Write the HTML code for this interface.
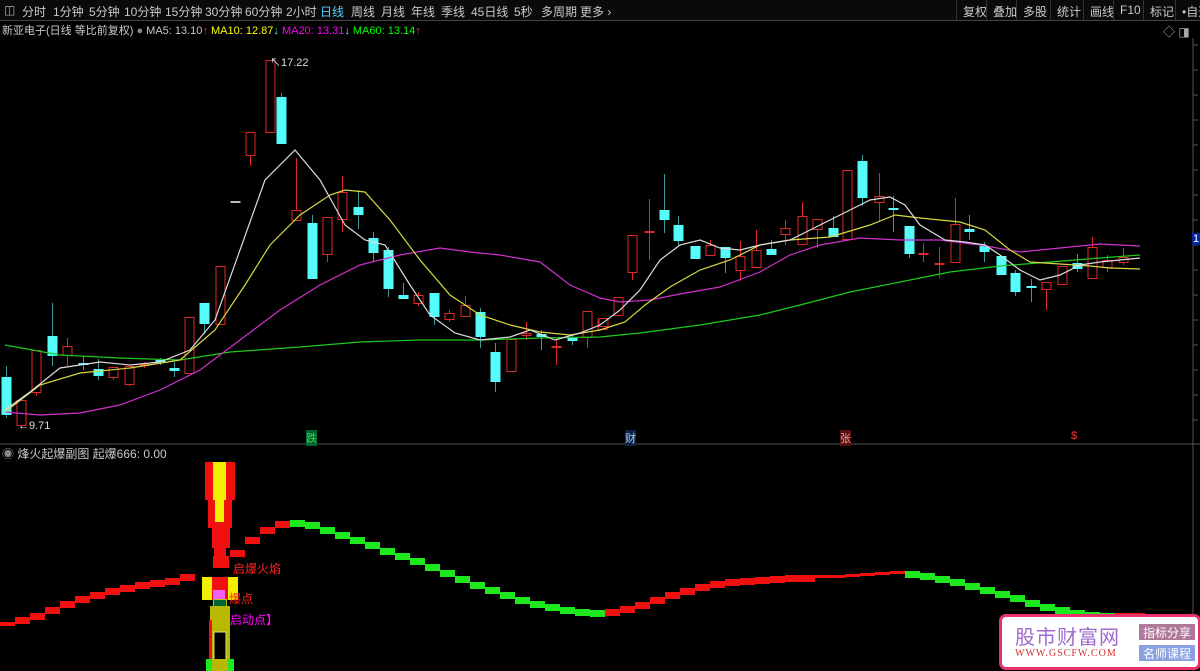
<!DOCTYPE html>
<html><head><meta charset="utf-8"><style>
html,body{margin:0;padding:0;background:#000;width:1200px;height:671px;overflow:hidden}
body{font-family:"Liberation Sans","Noto Sans CJK SC",sans-serif;position:relative}
.tb{position:absolute;top:0;left:0;width:1200px;height:20px;background:#0a0a0a;border-bottom:1px solid #444;font-size:12px;color:#c8c8c8}
.tb span{position:absolute;top:3px;white-space:nowrap}
.tr{position:absolute;top:0;height:20px;border-left:1px solid #333;padding:3px 6px 0 6px;box-sizing:border-box;font-size:12px;color:#c8c8c8;white-space:nowrap;overflow:hidden}
.hd{position:absolute;top:22px;left:2px;font-size:11px;color:#c8c8c8;white-space:nowrap}
.lbl{position:absolute;font-size:11px;white-space:nowrap}
</style></head><body>
<div class="tb">
<span style="left:4px;color:#aaa">◫</span>
<span style="left:22px">分时</span><span style="left:53px">1分钟</span><span style="left:89px">5分钟</span><span style="left:124px">10分钟</span><span style="left:165px">15分钟</span><span style="left:205px">30分钟</span><span style="left:245px">60分钟</span><span style="left:286px">2小时</span><span style="left:320px;color:#4fd3ff">日线</span><span style="left:351px">周线</span><span style="left:381px">月线</span><span style="left:411px">年线</span><span style="left:441px">季线</span><span style="left:471px">45日线</span><span style="left:514px">5秒</span><span style="left:541px">多周期</span><span style="left:580px">更多 ›</span>
</div>
<div class="tr" style="left:956px;width:30px">复权</div><div class="tr" style="left:986px;width:30px">叠加</div><div class="tr" style="left:1016px;width:34px">多股</div><div class="tr" style="left:1050px;width:33px">统计</div><div class="tr" style="left:1083px;width:30px">画线</div><div class="tr" style="left:1113px;width:30px">F10</div><div class="tr" style="left:1143px;width:32px">标记</div><div class="tr" style="left:1175px;width:25px">•自选</div>
<div class="hd">新亚电子(日线 等比前复权) <span style="color:#888">●</span> MA5: 13.10<span style="color:#f33">↑</span> <span style="color:#ff0">MA10: 12.87</span><span style="color:#4ff">↓</span> <span style="color:#f0f">MA20: 13.31</span><span style="color:#4ff">↓</span> <span style="color:#0f0">MA60: 13.14</span><span style="color:#f33">↑</span></div>
<div class="lbl" style="left:1163px;top:23px;color:#aaa;font-size:12px">◇ ◨</div>
<svg id="s" width="1200" height="671" style="position:absolute;left:0;top:0"></svg>
<div class="lbl" style="left:270px;top:54px;color:#ddd">↖17.22</div>
<div class="lbl" style="left:18px;top:420px;color:#ddd">←9.71</div>
<div class="lbl" style="left:306px;top:430px;color:#4c4;background:#063">跌</div>
<div class="lbl" style="left:625px;top:430px;color:#9cf;background:#124">财</div>
<div class="lbl" style="left:840px;top:430px;color:#f99;background:#511">张</div>
<div class="lbl" style="left:1071px;top:430px;color:#f33">$</div>
<div class="lbl" style="left:1192px;top:233px;color:#fff;background:#0026a0;font-size:11px;padding:0 1px">1</div>
<div class="lbl" style="left:2px;top:445px;color:#c8c8c8;font-size:12px"><span style="color:#888">◉</span> 烽火起爆副图 起爆666: 0.00</div>
<div class="lbl" style="left:233px;top:560px;color:#f22;font-size:12px">启爆火焰</div>
<div class="lbl" style="left:229px;top:590px;color:#f22;font-size:12px">爆点</div>
<div class="lbl" style="left:230px;top:611px;color:#f0f;font-size:12px">启动点】</div>
<div style="position:absolute;left:999px;top:614px;width:196px;height:50px;background:#fff;border:3px solid #e8306a;border-radius:7px">
<div style="position:absolute;left:13px;top:4px;font-size:20px;color:#a06ad0;letter-spacing:1px">股市财富网</div>
<div style="position:absolute;left:13px;top:31px;font-size:10px;color:#d03030;font-family:'Liberation Serif',serif;letter-spacing:1px">WWW.GSCFW.COM</div>
<div style="position:absolute;left:137px;top:7px;width:56px;height:16px;background:#b07898;color:#fff;font-size:12px;text-align:center">指标分享</div>
<div style="position:absolute;left:137px;top:28px;width:56px;height:16px;background:#8aa0e0;color:#fff;font-size:12px;text-align:center">名师课程</div>
</div>
<script>
var s=document.getElementById('s'),h='';
h+='<line x1="0" y1="444" x2="1200" y2="444" stroke="#555"/><line x1="1193" y1="38" x2="1193" y2="671" stroke="#555"/>';
for(var t=45;t<440;t+=25)h+='<line x1="1193" y1="'+t+'" x2="1198" y2="'+t+'" stroke="#555"/>';
var A=[[5,377,415,366,418,'c'],[18,400,426,400,428,'r'],[31,350,393,350,396,'r'],[45,336,356,303,366,'c'],[58,346,356,338,366,'r'],[72,363,365,356,370,'c'],[85,369,376,359,380,'c'],[98,367,378,367,380,'r'],[112,366,385,366,386,'r'],[125,364,366,362,368,'r'],[139,360,362,358,365,'c'],[152,368,371,362,377,'c'],[165,317,374,317,374,'r'],[178,303,324,303,334,'c'],[192,266,325,266,325,'r'],[205,202,203,202,203,'w'],[218,132,156,132,166,'r'],[235,60,133,60,133,'r'],[245,97,144,93,144,'c'],[258,210,221,158,221,'r'],[272,223,279,215,279,'c'],[285,217,255,217,262,'r'],[298,192,220,176,232,'r'],[312,207,215,190,229,'c'],[325,238,253,232,262,'c'],[338,250,289,247,297,'c'],[351,295,299,283,299,'c'],[364,295,304,292,306,'r'],[378,293,317,293,325,'c'],[391,313,320,310,322,'r'],[405,305,317,296,317,'r'],[418,312,337,308,348,'c'],[431,352,382,343,392,'c'],[445,339,372,339,372,'r'],[458,333,336,322,340,'r'],[471,334,337,330,350,'c'],[484,347,348,340,365,'r'],[498,338,341,334,345,'c'],[511,313,338,313,338,'r'],[524,319,330,319,330,'r']];
var B=[[586,311,338,311,348,'r'],[599,318,327,318,327,'r'],[612,297,316,297,316,'r'],[624,235,273,235,280,'r'],[638,231,233,199,260,'r'],[651,210,220,174,233,'c'],[663,225,241,216,246,'c'],[677,246,259,246,259,'c'],[690,245,256,240,256,'r'],[702,247,258,247,273,'c'],[715,256,271,241,281,'r'],[728,250,268,230,268,'r'],[741,249,255,240,255,'c'],[753,228,235,220,245,'r'],[767,216,245,202,245,'r'],[780,219,230,219,248,'r'],[793,228,237,216,237,'c'],[805,170,240,170,240,'r'],[818,161,198,155,206,'c'],[832,196,203,173,222,'r'],[844,208,210,196,232,'c'],[857,226,254,226,258,'c'],[869,253,255,243,262,'r'],[883,263,265,247,278,'r'],[896,224,263,198,263,'r'],[908,229,232,215,240,'c'],[921,246,252,242,262,'c'],[935,256,275,256,275,'c'],[947,273,292,270,296,'c'],[960,286,288,279,302,'c'],[973,282,290,282,310,'r'],[986,266,285,266,285,'r'],[999,263,269,254,272,'c'],[1012,247,279,237,279,'r'],[1024,260,268,255,272,'r'],[1038,257,263,248,265,'r']];
function cd(x,a,b,hi,lo,ty){var c=ty=='r'?'#e02828':ty=='w'?'#bbbbbb':'#54fcfc';var w=10;
h+='<line x1="'+x+'" y1="'+hi+'" x2="'+x+'" y2="'+lo+'" stroke="'+(ty=='r'?c:'#3a9a9a')+'"/>';
if(b-a<2){h+='<line x1="'+(x-5)+'" y1="'+a+'" x2="'+(x+5)+'" y2="'+a+'" stroke="'+c+'" stroke-width="2"/>';return}
if(ty=='r')h+='<rect x="'+(x-w/2+.5)+'" y="'+(a+.5)+'" width="'+(w-1)+'" height="'+(b-a-1)+'" fill="#000" stroke="'+c+'"/>';
else h+='<rect x="'+(x-w/2)+'" y="'+a+'" width="'+w+'" height="'+(b-a)+'" fill="'+c+'"/>';}
A.forEach(function(d){cd(Math.round(d[0]*1.148)+.5,d[1],d[2],d[3],d[4],d[5])});
B.forEach(function(d){cd(Math.round(580+(d[0]-580)*1.186)+.5,d[1],d[2],d[3],d[4],d[5])});
function pl(p,c){h+='<polyline fill="none" stroke="'+c+'" stroke-width="1.2" points="'+p+'"/>';}
pl('5,345 60,355 120,358 180,360 230,352 300,347 360,342 420,340 480,340 540,338 600,337 640,333 700,325 760,315 800,305 850,292 900,282 950,272 1000,266 1050,262 1100,258 1140,255','#1ec81e');
pl('5,412 40,415 80,413 120,405 160,390 200,370 240,340 280,310 320,285 360,265 400,255 440,248 470,252 500,255 540,262 570,285 600,298 620,302 650,300 680,294 720,287 760,272 790,255 820,245 860,238 900,240 940,240 980,245 1020,252 1060,248 1100,244 1140,246','#d030d0');
pl('5,412 40,385 80,373 130,368 180,360 215,330 245,285 270,245 300,215 330,195 345,190 365,192 390,220 420,260 450,295 480,315 510,325 540,332 570,335 600,330 625,322 645,305 670,287 700,270 730,260 760,245 790,240 830,237 870,225 895,215 920,218 960,222 985,230 1010,250 1030,262 1060,264 1090,266 1110,268 1140,269','#d8d840');
pl('5,410 30,392 60,368 100,362 130,365 160,362 190,350 215,320 240,250 265,180 295,150 320,180 345,225 365,240 385,245 410,285 430,315 455,333 480,340 510,337 530,330 555,340 580,333 600,325 620,310 640,290 660,260 680,245 700,240 720,248 740,250 760,245 790,240 810,230 830,220 850,210 870,200 890,197 905,205 920,225 945,240 965,242 985,245 1000,255 1020,270 1040,280 1060,275 1080,265 1100,262 1120,260 1140,258','#dcdcdc');
var Y=[[0,622],[15,617],[30,613],[45,607],[60,601],[75,596],[90,592],[105,588],[120,585],[135,582],[150,580],[165,578],[180,574],[230,550],[245,537],[260,527],[275,521],[290,520],[305,522],[320,527],[335,532],[350,537],[365,542],[380,548],[395,553],[410,558],[425,564],[440,570],[455,576],[470,582],[485,587],[500,592],[515,597],[530,601],[545,604],[560,607],[575,609],[590,610],[605,609],[620,606],[635,602],[650,597],[665,592],[680,588],[695,584],[710,581],[725,579],[740,578],[755,577],[770,576],[785,575],[800,575],[815,575],[830,575],[845,574],[860,573],[875,572],[890,571],[905,571],[920,573],[935,576],[950,579],[965,583],[980,587],[995,591],[1010,595],[1025,600],[1040,604],[1055,607],[1070,610],[1085,612],[1100,613],[1115,613],[1130,613]];
Y.forEach(function(p,i){var x=p[0],g=(x>=290&&x<=590)||(x>=905&&x<=1100);var hh=(i==0||x>=1100)?4:(x>=805&&x<=900)?3:7;
h+='<rect x="'+x+'" y="'+p[1]+'" width="15" height="'+hh+'" fill="'+(g?'#1ee81e':'#f01010')+'"/>';});
h+='<rect x="205" y="462" width="30" height="38" fill="#f01010"/><rect x="213" y="462" width="13" height="38" fill="#f0f000"/>';
h+='<rect x="208" y="500" width="24" height="28" fill="#f01010"/><rect x="215" y="500" width="9" height="22" fill="#f0f000"/>';
h+='<rect x="212" y="528" width="18" height="20" fill="#f01010"/><rect x="214" y="548" width="12" height="12" fill="#f01010"/><rect x="213" y="556" width="16" height="12" fill="#f01010"/>';
h+='<rect x="202" y="577" width="36" height="23" fill="#f0f000"/><rect x="212" y="577" width="16" height="23" fill="#f01010"/>';
h+='<rect x="213" y="590" width="12" height="9" fill="#f060ff"/><rect x="213" y="599" width="14" height="8" fill="#c0c000"/><rect x="214" y="600" width="12" height="6" fill="#063"/>';
h+='<rect x="210" y="606" width="20" height="58" fill="#b8b800"/><rect x="209" y="620" width="3" height="40" fill="#f01010"/><rect x="214" y="632" width="12" height="28" fill="#000" stroke="#e0e080"/>';
h+='<rect x="206" y="659" width="28" height="12" fill="#1ee81e"/><rect x="212" y="659" width="16" height="12" fill="#b8b800"/>';
s.innerHTML=h;
</script>
</body></html>
